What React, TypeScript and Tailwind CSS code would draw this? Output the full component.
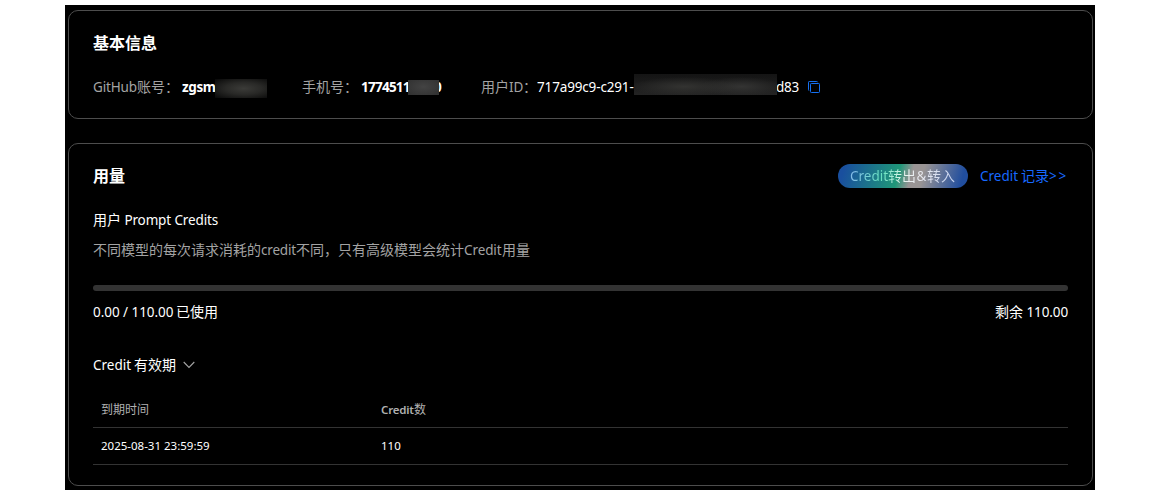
import React from "react";

type LatinProps = { className?: string; children: React.ReactNode };

/* Latin runs sit slightly smaller than the Chinese glyphs next to them. */
function Latin({ className = "", children }: LatinProps) {
  return <span className={`inline-block whitespace-pre font-['Noto_Sans','Open_Sans',sans-serif] ${className}`}>{children}</span>;
}

function CopyIcon() {
  return (
    <svg className="ml-[10px] mt-[4px] h-[12px] w-[12px] shrink-0" viewBox="0 0 12 12" fill="none" stroke="#1670f0">
      <path d="M9.5 1.2a.7.7 0 0 0-.7-.7H1.2a.7.7 0 0 0-.7.7v7.6a.7.7 0 0 0 .7.7" />
      <rect x="2.5" y="2.5" width="9" height="9" rx=".8" />
    </svg>
  );
}

function BasicInfo() {
  return (
    <section className="h-[109px] rounded-[10px] border border-[#4d4d4d] px-6 pt-[21px]">
      <h2 className="text-[16px] leading-[22px] font-bold text-white">基本信息</h2>
      <div className="mt-[23px] flex h-[20px] whitespace-nowrap">
        <div className="w-[89px] shrink-0 text-[#a3a3a3]">
          <Latin className="w-[44px] text-[13.5px] tracking-[-0.15px]">GitHub</Latin>账号：
        </div>
        <div className="flex w-[120px] shrink-0 text-white">
          <Latin className="w-[33px] text-[13.5px] font-bold tracking-[-0.4px]">zgsm</Latin>
          <span className="mt-[2px] h-[19px] w-[52px] bg-[radial-gradient(ellipse_at_55%_50%,#3b3b38_0%,#292927_45%,#080808_100%)]" />
        </div>
        <div className="w-[59px] shrink-0 text-[#a3a3a3]">手机号：</div>
        <div className="flex w-[120px] shrink-0 text-white">
          <Latin className="w-[47px] text-[13.5px] font-bold tracking-[-0.75px]">1774511</Latin>
          <span className="relative z-10 mt-[3px] h-[15px] w-[31px] bg-[radial-gradient(ellipse_at_50%_45%,#434343,#303030)]" />
          <Latin className="-ml-[5px] text-[13.5px] font-bold">0</Latin>
        </div>
        <div className="w-[56px] shrink-0 text-[#a3a3a3]">
          用户<Latin className="w-[14px] text-[13.5px]">ID</Latin>：
        </div>
        <div className="flex text-white">
          <Latin className="w-[97px] text-[13.5px] tracking-[-0.15px]">717a99c9-c291-</Latin>
          <span className="relative z-10 -mt-[3px] h-[21px] w-[143px] bg-[radial-gradient(ellipse_90px_16px_at_35%_60%,#333331_0%,transparent_60%),radial-gradient(ellipse_70px_16px_at_75%_60%,#343433_0%,transparent_60%),linear-gradient(#141414,#232323)]" />
          <Latin className="-ml-px w-[22px] text-[13.5px] tracking-[-0.3px]">d83</Latin>
          <CopyIcon />
        </div>
      </div>
    </section>
  );
}

function CreditTable() {
  return (
    <div className="mt-[17px] text-[12px] leading-[18px]">
      <div className="flex h-[36px] border-b border-[#333] px-2 pt-[9px] text-[#b0b0b0]">
        <div className="w-[280px]">到期时间</div>
        <div>
          <Latin className="w-[33px] text-[11.5px] font-semibold tracking-[-0.2px]">Credit</Latin>数
        </div>
      </div>
      <div className="flex h-[37px] border-b border-[#333] px-2 pt-[9px] text-white">
        <Latin className="w-[280px] text-[11.5px]">2025-08-31 23:59:59</Latin>
        <Latin className="text-[11.5px]">110</Latin>
      </div>
    </div>
  );
}

function Usage() {
  return (
    <section className="mt-[24px] h-[343px] rounded-[10px] border border-[#4d4d4d] px-6 pt-[20px]">
      <div className="flex h-[24px] items-center">
        <h2 className="flex-1 text-[16px] leading-[24px] font-bold text-white">用量</h2>
        <button className="flex h-[24px] w-[130px] items-center rounded-full bg-[linear-gradient(105deg,#194f9e_5%,#1f9778_46%,#999494_56%,#999494_64%,#214e9e_94%)] pl-3 whitespace-nowrap">
          <span className="bg-[linear-gradient(105deg,#83bee7_5%,#67e3bf_32%,#e9f5f0_50%,#e9eaf0_65%,#c5d2f0_100%)] bg-clip-text leading-[20px] text-transparent">
            <Latin className="w-[38px] text-[13.5px]">Credit</Latin>转出<Latin className="w-[11px] text-[13.5px]">&amp;</Latin>转入
          </span>
        </button>
        <a className="ml-3 w-[88px] whitespace-nowrap text-[#1769ff]">
          <Latin className="w-[41px] text-[13.5px]">Credit </Latin>记录<Latin className="text-[13.5px] tracking-[1.7px]">&gt;&gt;</Latin>
        </a>
      </div>
      <div className="mt-[22px] h-[20px] whitespace-nowrap text-white">
        用户<Latin className="text-[13.5px] tracking-[-0.13px]"> Prompt Credits</Latin>
      </div>
      <p className="mt-[10px] h-[20px] whitespace-nowrap text-[#a3a3a3]">
        不同模型的每次请求消耗的<Latin className="w-[35px] text-[13.5px] tracking-[-0.2px]">credit</Latin>不同，只有高级模型会统计<Latin className="w-[38px] text-[13.5px] tracking-[-0.1px]">Credit</Latin>用量
      </p>
      <div className="mt-[25px] h-[6px] rounded-full bg-[#333]" />
      <div className="mt-[11px] flex h-[20px] justify-between whitespace-nowrap text-white">
        <div>
          <Latin className="w-[83px] text-[13.5px] tracking-[-0.05px]">0.00 / 110.00 </Latin>已使用
        </div>
        <div>
          剩余<Latin className="w-[45px] text-[13.5px] tracking-[-0.1px]"> 110.00</Latin>
        </div>
      </div>
      <div className="mt-[33px] flex h-[20px] items-center text-white">
        <Latin className="w-[41px] text-[13.5px]">Credit </Latin>有效期
        <svg className="ml-[7px] h-[12px] w-[12px]" viewBox="0 0 12 12" fill="none" stroke="#a3a3a3" strokeWidth="1.1">
          <path d="M.7 3 6 8.5 11.3 3" />
        </svg>
      </div>
      <CreditTable />
    </section>
  );
}

export default function App() {
  return (
    <div className="h-[499px] w-[1162px] overflow-hidden bg-white pt-[5px] pl-[65px]">
      <main className="h-[485px] w-[1030px] bg-black pt-[5px] pr-[2px] pl-[3px] font-['Noto_Sans','Noto_Sans_CJK_SC',sans-serif] text-[14px] leading-[20px]">
        <BasicInfo />
        <Usage />
      </main>
    </div>
  );
}
